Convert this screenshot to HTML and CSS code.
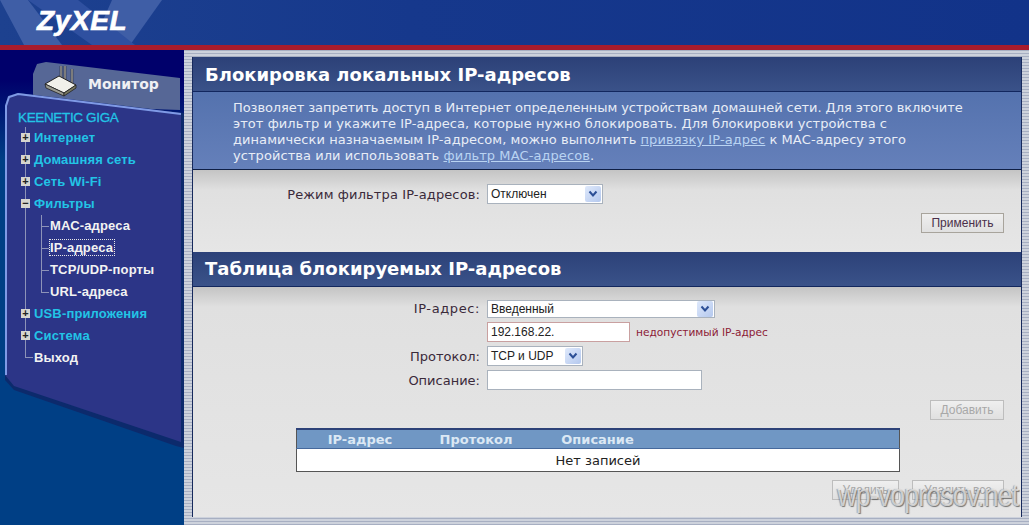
FILE: index.html
```html
<!DOCTYPE html>
<html lang="en">
<head>
    <meta charset="UTF-8">
    <title>ZyXEL Keenetic Giga</title>
    <link rel="stylesheet" href="styles.css">
</head>
<body>
    <div class="header">
        <svg class="header-art" width="300" height="45" viewBox="0 0 300 45">
            <polygon points="0,0 28,0 62,45 24,45" fill="#3f5ea6"/>
            <polygon points="112,0 162,0 130,45 92,45" fill="#3f5ea6"/>
            <polygon points="28,0 78,0 135,45 92,45" fill="#2f50a0"/>
        </svg>
        <div class="logo">ZyXEL</div>
    </div>

    <div class="page">
        <!-- Left menu -->
        <div class="sidebar">
            <svg class="sidebar-art" width="184" height="475" viewBox="0 0 184 475">
                <polygon points="33,55 33,24 37,14 46,12 180,28 180,60" fill="#566796"/>
                <polygon points="5,330 5,56 8,46 18,43 184,63 184,398 176,396 14,340" fill="#0c2a6c"/>
                <polygon points="5,325 5,56 8,46 18,43 181,63 181,392 14,336" fill="#2c3587"/>
                <polyline points="6,325 6,56 9,47 18,44 181,64" fill="none" stroke="#7f9ae6" stroke-width="2"/>
            </svg>
            <svg class="router" width="34" height="32" viewBox="0 0 34 32">
                <path d="M17 1 L17 15 M21 1 L21 15 M28 4 L28 18" stroke="#111" stroke-width="2.4" fill="none"/>
                <path d="M17 1 L17 15 M21 1 L21 15 M28 4 L28 18" stroke="#e8e8e8" stroke-width="1" fill="none"/>
                <polygon points="1,19 15,11 32,20 20,28" fill="#f0f0ea" stroke="#222" stroke-width="1"/>
                <polygon points="1,19 20,28 20,31 2,23" fill="#9a9a90" stroke="#222" stroke-width="0.8"/>
                <polygon points="20,28 32,20 32,23 20,31" fill="#77775f" stroke="#222" stroke-width="0.8"/>
            </svg>
            <div class="tab-title">Монитор</div>
            <div class="menu-title">KEENETIC GIGA</div>
            <ul class="tree">
                <li class="node"><span class="toggle">+</span><a>Интернет</a></li>
                <li class="node"><span class="toggle">+</span><a>Домашняя сеть</a></li>
                <li class="node"><span class="toggle">+</span><a>Сеть Wi-Fi</a></li>
                <li class="node"><span class="toggle">−</span><a>Фильтры</a>
                    <ul class="subtree">
                        <li>МАС-адреса</li>
                        <li><span class="current">IP-адреса</span></li>
                        <li>TCP/UDP-порты</li>
                        <li>URL-адреса</li>
                    </ul>
                </li>
                <li class="node"><span class="toggle">+</span><a>USB-приложения</a></li>
                <li class="node"><span class="toggle">+</span><a>Система</a></li>
                <li class="node exit"><a>Выход</a></li>
            </ul>
        </div>

        <!-- Main panel -->
        <div class="main">
            <div class="panel">
                <h1 class="panel-title">Блокировка локальных IP-адресов</h1>
                <div class="description">
                    <div class="first-line">Позволяет запретить доступ в Интернет определенным устройствам домашней сети. Для этого включите</div>
                    <div>этот фильтр и укажите IP-адреса, которые нужно блокировать. Для блокировки устройства с</div>
                    <div>динамически назначаемым IP-адресом, можно выполнить <a href="#">привязку IP-адрес</a> к МАС-адресу этого</div>
                    <div>устройства или использовать <a href="#">фильтр МАС-адресов</a>.</div>
                </div>
                <div class="section section-filter">
                    <div class="form-row">
                        <label class="form-label label-mode">Режим фильтра IP-адресов:</label>
                        <div class="select select-mode">Отключен<span class="arrow"><svg width="10" height="8" viewBox="0 0 10 8"><path d="M1.5 1.5 L5 5.5 L8.5 1.5" fill="none" stroke="#2c4f96" stroke-width="2"/></svg></span></div>
                    </div>
                    <div class="actions"><button class="btn btn-apply">Применить</button></div>
                </div>

                <h1 class="panel-title panel-title-second">Таблица блокируемых IP-адресов</h1>
                <div class="section section-table">
                    <div class="form-row row-ip">
                        <label class="form-label label-ip">IP-адрес:</label>
                        <div class="select select-ip">Введенный<span class="arrow"><svg width="10" height="8" viewBox="0 0 10 8"><path d="M1.5 1.5 L5 5.5 L8.5 1.5" fill="none" stroke="#2c4f96" stroke-width="2"/></svg></span></div>
                    </div>
                    <div class="form-row">
                        <label class="form-label"></label>
                        <div class="input input-ip">192.168.22.</div>
                        <span class="error">недопустимый IP-адрес</span>
                    </div>
                    <div class="form-row">
                        <label class="form-label">Протокол:</label>
                        <div class="select select-proto">TCP и UDP<span class="arrow"><svg width="10" height="8" viewBox="0 0 10 8"><path d="M1.5 1.5 L5 5.5 L8.5 1.5" fill="none" stroke="#2c4f96" stroke-width="2"/></svg></span></div>
                    </div>
                    <div class="form-row">
                        <label class="form-label">Описание:</label>
                        <div class="input input-desc"></div>
                    </div>
                    <div class="actions actions-add"><button class="btn btn-disabled btn-add">Добавить</button></div>
                    <table class="rules">
                        <thead>
                            <tr><th class="col-ip">IP-адрес</th><th class="col-proto">Протокол</th><th class="col-desc">Описание</th><th></th></tr>
                        </thead>
                        <tbody>
                            <tr><td colspan="4">Нет записей</td></tr>
                        </tbody>
                    </table>
                    <div class="actions actions-del">
                        <button class="btn btn-disabled btn-del">Удалить</button>
                        <button class="btn btn-disabled btn-delall">Удалить все</button>
                    </div>
                </div>
            </div>
        </div>
    </div>
    <div class="watermark">wp-voprosov.net</div>
</body>
</html>
```

FILE: styles.css
```css
html, body {
    margin: 0;
    padding: 0;
}
body {
    width: 1029px;
    height: 525px;
    overflow: hidden;
    position: relative;
    font-family: "DejaVu Sans", sans-serif;
    background: #fff;
}
.header {
    position: relative;
    height: 45px;
    border-bottom: 5px solid #a81c2c;
    background: linear-gradient(90deg, #1d418f 0%, #16388c 40%, #123389 100%);
    overflow: hidden;
}
.header-art {
    position: absolute;
    left: 0;
    top: 0;
}
.logo {
    position: relative;
    padding: 5px 0 0 37px;
    font-family: "Liberation Sans", sans-serif;
    font-size: 28px;
    font-weight: bold;
    font-style: italic;
    letter-spacing: 0.6px;
    -webkit-text-stroke: 0.7px #fff;
    color: #fff;
}
.page {
    display: flex;
    height: 475px;
}

/* sidebar */
.sidebar {
    position: relative;
    width: 184px;
    flex: none;
    background: linear-gradient(180deg, #00006b 0, #00006b 30px, #003f85 110px, #003f85 100%);
    font-family: "Liberation Sans", sans-serif;
    font-size: 13px;
    font-weight: bold;
    letter-spacing: 0.15px;
}
.sidebar-art {
    position: absolute;
    left: 0;
    top: 0;
}
.router {
    position: absolute;
    left: 44px;
    top: 15px;
}
.tab-title {
    position: relative;
    padding: 26px 0 0 88px;
    height: 18px;
    font-family: "DejaVu Sans", sans-serif;
    font-size: 14px;
    letter-spacing: 0;
    color: #f0f0f4;
}
.menu-title {
    position: relative;
    margin: 16px 0 0 18px;
    height: 16px;
    line-height: 16px;
    font-size: 13.5px;
    font-weight: normal;
    -webkit-text-stroke: 0.3px #22c4e6;
    letter-spacing: -0.35px;
    color: #22c4e6;
}
.tree, .subtree {
    position: relative;
    list-style: none;
    margin: 0;
    padding: 0;
}
.tree {
    margin-top: 1px;
    padding-left: 34px;
}
.node {
    position: relative;
    line-height: 22px;
    color: #22c4e6;
}
.node a {
    display: block;
    height: 22px;
}
.node::before {
    content: "";
    position: absolute;
    left: -9px;
    top: 0;
    bottom: 0;
    border-left: 1px solid #8d93b8;
}
.exit {
    color: #f2f2f2;
}
.exit::before {
    bottom: 11px;
    width: 7px;
    border-bottom: 1px solid #8d93b8;
}
.toggle {
    position: absolute;
    z-index: 1;
    left: -13px;
    top: 6px;
    width: 9px;
    height: 9px;
    background: #d5d5cf;
    border: 0;
    color: #222;
    font-size: 11px;
    line-height: 9px;
    text-align: center;
}
.subtree {
    padding-left: 16px;
    color: #f2f2f2;
}
.subtree li {
    position: relative;
    height: 22px;
    line-height: 22px;
}
.subtree li::before {
    content: "";
    position: absolute;
    left: -9px;
    top: 0;
    width: 7px;
    height: 11px;
    border-left: 1px solid #8d93b8;
    border-bottom: 1px solid #8d93b8;
}
.subtree li:not(:last-child)::after {
    content: "";
    position: absolute;
    left: -9px;
    top: 11px;
    bottom: 0;
    border-left: 1px solid #8d93b8;
}
.current {
    outline: 1px dotted #e8e8e8;
    padding-right: 1px;
}

/* main */
.main {
    flex: 1;
    padding: 7px 7px 8px 8px;
    background: repeating-linear-gradient(180deg, #a7afc2 0, #a7afc2 1px, #cdd2dc 1px, #cdd2dc 3px);
}
.panel {
    height: 460px;
    box-sizing: border-box;
    background: #e4e4e4;
    border-left: 1px solid #16295c;
    border-right: 1px solid #16295c;
    border-bottom: 1px solid #16295c;
}
.panel-title {
    margin: 0;
    height: 35px;
    box-sizing: border-box;
    padding-left: 12px;
    line-height: 36px;
    font-size: 18px;
    font-weight: bold;
    color: #fff;
    background: linear-gradient(180deg, #2c4178 0%, #3a5289 100%);
    border-bottom: 1px solid #12275e;
}
.panel-title-second {
    line-height: 33px;
}
.description {
    height: 78px;
    box-sizing: border-box;
    padding: 8px 0 0 40px;
    font-size: 13px;
    line-height: 16px;
    letter-spacing: 0.06px;
    color: #e8edf6;
    background: linear-gradient(180deg, #5472ae 0%, #6580ba 100%);
    border-bottom: 1px solid #0f1f45;
}
.first-line {
    letter-spacing: -0.08px;
}
.description a {
    color: #b9d3f2;
}
.section {
    box-sizing: border-box;
    background: linear-gradient(180deg, #c4c4c4 0, #e0e0e0 20px, #e6e6e6 100%);
}
.section-filter {
    height: 82px;
    padding-top: 14px;
}
.section-table {
    height: 230px;
    padding-top: 12px;
}
.form-row {
    display: flex;
    align-items: center;
    height: 20px;
    margin-bottom: 4px;
}
.row-ip {
    height: 19px;
}
.form-label {
    width: 287px;
    flex: none;
    margin-right: 7px;
    text-align: right;
    font-size: 13px;
    color: #3a2a3a;
}
.label-mode {
    letter-spacing: 0.12px;
}
.label-ip {
    letter-spacing: 0.6px;
}
.select, .input {
    box-sizing: border-box;
    height: 20px;
    line-height: 18px;
    padding-left: 3px;
    font-family: "Liberation Sans", sans-serif;
    font-size: 12px;
    color: #222;
    background: #fff;
    border: 1px solid #a9b2bd;
}
.select {
    display: flex;
    justify-content: space-between;
    align-items: center;
}
.arrow {
    display: flex;
    align-items: center;
    justify-content: center;
    width: 16px;
    height: 16px;
    margin-right: 1px;
    background: linear-gradient(135deg, #dfe9fb, #b4c8ee);
    border-radius: 2px;
}
.select-mode { width: 116px; }
.select-ip { width: 228px; height: 18px; }
.select-proto { width: 96px; }
.input-ip {
    width: 143px;
    border-color: #c9a0a0;
}
.input-desc { width: 215px; }
.error {
    margin-left: 6px;
    font-size: 10.6px;
    color: #8c2036;
}
.actions {
    display: flex;
    justify-content: flex-end;
    padding-right: 17px;
}
.btn {
    box-sizing: border-box;
    height: 20px;
    padding: 0;
    background: linear-gradient(180deg, #efefef, #e0e0e0);
    border: 1px solid #a8a49c;
    font-family: "Liberation Sans", sans-serif;
    font-size: 12px;
    color: #4a2f4a;
}
.btn-disabled {
    color: #a8a8a8;
    border-color: #bdbdbd;
}
.section-filter .actions { margin-top: 9px; }
.btn-apply { width: 83px; }
.actions-add { margin-top: 10px; }
.btn-add { width: 74px; }
.btn-del { width: 67px; margin-right: 13px; }
.btn-delall { width: 92px; }
.actions-del { margin-top: 8px; }
.rules {
    width: 604px;
    margin: 8px 0 0 103px;
    border-collapse: collapse;
    background: #fff;
    border-left: 1px solid #555;
    border-right: 1px solid #555;
    border-bottom: 1px solid #555;
}
.rules th {
    height: 18px;
    padding: 0;
    font-size: 13px;
    font-weight: bold;
    color: #dbe8f4;
    background: #7097c4;
    border-top: 2px solid #2d4278;
    border-bottom: 1px solid #46699c;
}
.rules .col-ip { width: 126px; }
.rules .col-proto { width: 106px; }
.rules .col-desc { width: 137px; }
.rules td {
    height: 22px;
    padding: 0;
    text-align: center;
    font-size: 13px;
    color: #222;
}

/* screenshot watermark */
.watermark {
    position: absolute;
    right: 11px;
    top: 478px;
    font-family: "Liberation Sans", sans-serif;
    font-size: 31px;
    letter-spacing: -1px;
    color: rgba(245, 245, 245, 0.7);
    text-shadow: 1px 1px 1px rgba(90, 90, 90, 0.8), -1px 0 1px rgba(90, 90, 90, 0.5);
    transform: scaleX(0.86);
    transform-origin: right center;
}
```
